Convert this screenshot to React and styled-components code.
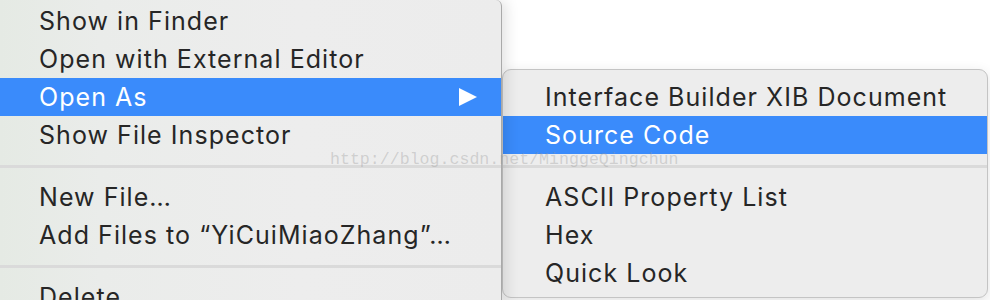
import styled, { createGlobalStyle } from 'styled-components'

const GlobalStyle = createGlobalStyle`
  html, body {
    margin: 0;
    padding: 0;
    background: #ffffff;
    overflow: hidden;
  }
  body {
    width: 990px;
    height: 300px;
    font-family: Inter, "Liberation Sans", Arial, sans-serif;
    -webkit-font-smoothing: antialiased;
  }
`

const Screen = styled.div`
  position: relative;
  display: flex;
  width: 990px;
  height: 300px;
  overflow: hidden;
  background: #ffffff;
`

const Menu = styled.div`
  flex: 0 0 502px;
  height: 330px;
  box-sizing: border-box;
  padding-top: 2px;
  background: linear-gradient(90deg, #e5eae4 0%, #eaecea 20%, #ededed 60%, #ececec 100%);
  border-right: 1px solid #a9a9a9;
  border-top-right-radius: 6px;
  box-shadow: 4px 0 14px rgba(0, 0, 0, 0.12);
  z-index: 1;
`

const Side = styled.div`
  flex: 1;
  padding: 69px 2px 0 0;
  display: flex;
  flex-direction: column;
`

const SubMenu = styled.div`
  height: 229px;
  box-sizing: border-box;
  padding-top: 8px;
  background: #ededed;
  border: 1px solid #c4c4c4;
  border-radius: 9px;
  box-shadow: 0 4px 14px rgba(0, 0, 0, 0.12);
`

const Item = styled.div`
  position: relative;
  height: 38px;
  display: flex;
  align-items: center;
  padding-left: ${p => p.$indent}px;
  font-size: 25px;
  letter-spacing: 1.05px;
  color: ${p => (p.$active ? '#ffffff' : '#262626')};
  background: ${p => (p.$active ? '#3a8bfb' : 'transparent')};
  white-space: nowrap;
`

const Arrow = styled.span`
  margin-left: auto;
  margin-right: 24px;
  width: 0;
  height: 0;
  border-top: 9.5px solid transparent;
  border-bottom: 9.5px solid transparent;
  border-left: 18px solid #ffffff;
`

const Separator = styled.div`
  height: 24px;
  display: flex;
  align-items: center;
  &::after {
    content: '';
    flex: 1;
    height: 3px;
    background: #dadada;
  }
`

const Watermark = styled.div`
  position: absolute;
  left: 330px;
  top: 150px;
  font-family: "Liberation Mono", "Courier New", monospace;
  font-size: 16.6px;
  color: rgba(150, 150, 150, 0.35);
  pointer-events: none;
  z-index: 5;
`

const mainItems = [
  'Show in Finder',
  'Open with External Editor',
  { label: 'Open As', active: true, sub: true },
  'Show File Inspector',
  '-',
  'New File…',
  'Add Files to “YiCuiMiaoZhang”…',
  '-',
  'Delete',
]

const subItems = [
  'Interface Builder XIB Document',
  { label: 'Source Code', active: true },
  '-',
  'ASCII Property List',
  'Hex',
  'Quick Look',
]

const renderItems = (items, indent) =>
  items.map((it, i) => {
    if (it === '-') return <Separator key={i} />
    const item = typeof it === 'string' ? { label: it } : it
    return (
      <Item key={i} $indent={indent} $active={item.active}>
        {item.label}
        {item.sub && <Arrow />}
      </Item>
    )
  })

const App = () => {
  return (
    <>
      <GlobalStyle />
      <Screen>
        <Menu>{renderItems(mainItems, 39)}</Menu>
        <Side>
          <SubMenu>{renderItems(subItems, 42)}</SubMenu>
        </Side>
        <Watermark>http://blog.csdn.net/MinggeQingchun</Watermark>
      </Screen>
    </>
  )
}

export default App
